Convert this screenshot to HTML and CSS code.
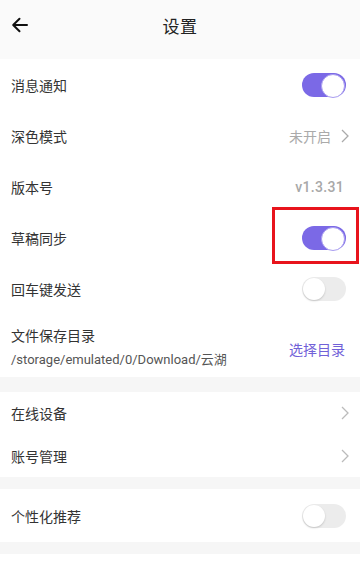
FILE: index.html
```html
<!DOCTYPE html>
<html lang="zh">
<head>
<meta charset="utf-8">
<link rel="stylesheet" href="styles.css">
</head>
<body>
<div class="screen">
  <header class="topbar">
    <svg class="back" viewBox="0 0 20 20" width="20" height="20"><path d="M17 10H3.5M9.5 3.8L3.2 10l6.3 6.2" fill="none" stroke="#111" stroke-width="2" stroke-linecap="round" stroke-linejoin="round"/></svg>
    <div class="title">设置</div>
  </header>

  <section class="group first">
    <div class="row"><span class="label">消息通知</span><span class="toggle on"></span></div>
    <div class="row"><span class="label">深色模式</span><span class="value">未开启<svg class="chev" viewBox="0 0 8 14" width="8" height="14"><path d="M1 1l6 6-6 6" fill="none" stroke="#aaa" stroke-width="1.3"/></svg></span></div>
    <div class="row"><span class="label">版本号</span><span class="value ver">v1.3.31</span></div>
    <div class="row"><span class="label">草稿同步</span><span class="toggle on"></span></div>
    <div class="row"><span class="label">回车键发送</span><span class="toggle"></span></div>
    <div class="row tall">
      <div class="stack"><span class="label">文件保存目录</span><span class="path">/storage/emulated/0/Download/云湖</span></div>
      <span class="link">选择目录</span>
    </div>
  </section>

  <section class="group">
    <div class="row short"><span class="label">在线设备</span><svg class="chev" viewBox="0 0 8 14" width="8" height="14"><path d="M1 1l6 6-6 6" fill="none" stroke="#bbb" stroke-width="1.3"/></svg></div>
    <div class="row short"><span class="label">账号管理</span><svg class="chev" viewBox="0 0 8 14" width="8" height="14"><path d="M1 1l6 6-6 6" fill="none" stroke="#bbb" stroke-width="1.3"/></svg></div>
  </section>

  <section class="group">
    <div class="row mid"><span class="label">个性化推荐</span><span class="toggle"></span></div>
  </section>

  <section class="group">
    <div class="row"><span class="label">青少年模式</span><svg class="chev" viewBox="0 0 8 14" width="8" height="14"><path d="M1 1l6 6-6 6" fill="none" stroke="#bbb" stroke-width="1.3"/></svg></div>
  </section>

  <div class="highlight"></div>
</div>
</body>
</html>
```
FILE: styles.css
```css
* { box-sizing: border-box; }
html, body { margin: 0; padding: 0; }
body {
  width: 360px;
  height: 572px;
  overflow: hidden;
  background: #f6f6f6;
  font-family: Roboto, "Noto Sans CJK SC", sans-serif;
}
.screen { position: relative; }
.topbar {
  height: 59px;
  background: #fafafa;
  display: flex;
  align-items: center;
  justify-content: center;
  position: relative;
  padding-bottom: 8px;
}
.back { position: absolute; left: 10px; top: 15px; }
.title { font-size: 17px; color: #222; letter-spacing: 0.5px; }
.group {
  background: #fff;
  margin-bottom: 12px;
}
.group.first { margin-bottom: 15px; }
.row {
  height: 51px;
  display: flex;
  align-items: center;
  justify-content: space-between;
  padding: 0 12px 0 11px;
}
.row.short { height: 42.5px; padding-right: 11px; }
.row.mid { height: 53px; }
.row.tall { height: 63px; align-items: center; }
.label { font-size: 14px; color: #333; }
.value { font-size: 14px; color: #aaa; display: flex; align-items: center; gap: 10px; }
.value.ver { font-weight: 500; color: #a8a8a8; padding-right: 4px; letter-spacing: 0.3px; }
.value .chev { margin-right: -1px; }
.stack { display: flex; flex-direction: column; gap: 4px; padding-top: 2px; }
.path { font-size: 13px; color: #555; }
.link { font-size: 14px; color: #7161d8; padding-right: 3px; padding-top: 6px; }
.toggle {
  width: 44px;
  height: 24px;
  border-radius: 12px;
  background: #ececec;
  position: relative;
  margin-right: 2px;
}
.toggle::after {
  content: "";
  position: absolute;
  left: 1px;
  top: 1px;
  width: 22px;
  height: 22px;
  border-radius: 50%;
  background: #fff;
  box-shadow: 0 1px 2px rgba(0,0,0,0.18);
}
.toggle.on { background: #7b69e6; }
.toggle.on::after {
  left: auto;
  right: 1px;
  box-shadow: none;
  border: 1.5px solid #a89cf0;
  background: #fff;
}
.highlight {
  position: absolute;
  left: 272px;
  top: 207px;
  width: 87px;
  height: 57px;
  border: 3px solid #e8141c;
}
```
